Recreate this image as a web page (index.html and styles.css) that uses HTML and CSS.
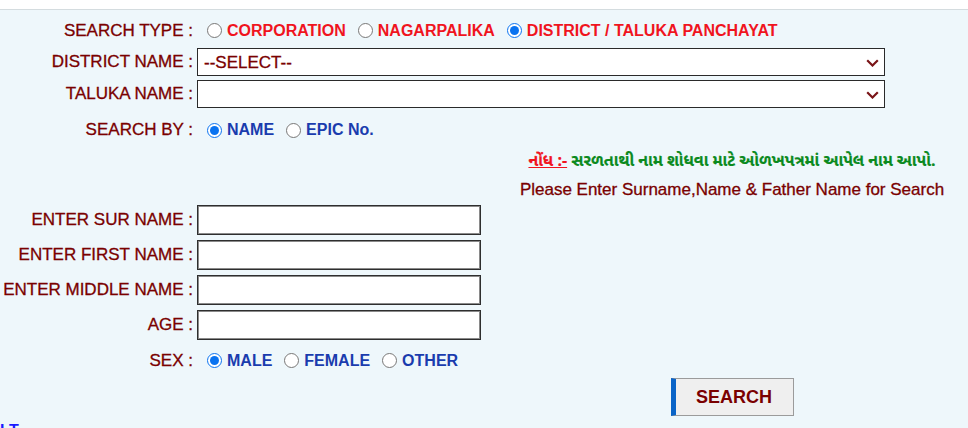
FILE: index.html
```html
<!DOCTYPE html>
<html lang="gu">
<head>
<meta charset="utf-8">
<title>Search</title>
<link rel="stylesheet" href="styles.css">
</head>
<body>
<div class="topbar"></div>
<main class="form">
  <div class="row r-type">
    <span class="lbl">SEARCH TYPE :</span>
    <div class="opts red">
      <label class="opt"><input type="radio" name="stype">CORPORATION</label>
      <label class="opt"><input type="radio" name="stype">NAGARPALIKA</label>
      <label class="opt"><input type="radio" name="stype" checked>DISTRICT / TALUKA PANCHAYAT</label>
    </div>
  </div>
  <div class="row r-select">
    <label class="lbl">DISTRICT NAME :</label>
    <div class="sel">
      <select><option>--SELECT--</option></select>
      <svg class="chev" width="13" height="8" viewBox="0 0 13 8"><polyline points="1.2,1.2 6.5,6.5 11.8,1.2" fill="none" stroke="#7a1518" stroke-width="2.2"/></svg>
    </div>
  </div>
  <div class="row r-select">
    <label class="lbl">TALUKA NAME :</label>
    <div class="sel">
      <select><option></option></select>
      <svg class="chev" width="13" height="8" viewBox="0 0 13 8"><polyline points="1.2,1.2 6.5,6.5 11.8,1.2" fill="none" stroke="#7a1518" stroke-width="2.2"/></svg>
    </div>
  </div>
  <div class="row r-by">
    <span class="lbl">SEARCH BY :</span>
    <div class="opts blue">
      <label class="opt"><input type="radio" name="sby" checked>NAME</label>
      <label class="opt"><input type="radio" name="sby">EPIC No.</label>
    </div>
  </div>
  <p class="note note-guj"><span class="note-key">નોંધ :-</span> સરળતાથી નામ શોધવા માટે ઓળખપત્રમાં આપેલ નામ આપો.</p>
  <p class="note note-en">Please Enter Surname,Name &amp; Father Name for Search</p>
  <div class="row r-input">
    <label class="lbl">ENTER SUR NAME :</label>
    <input class="txt" type="text">
  </div>
  <div class="row r-input">
    <label class="lbl">ENTER FIRST NAME :</label>
    <input class="txt" type="text">
  </div>
  <div class="row r-input">
    <label class="lbl">ENTER MIDDLE NAME :</label>
    <input class="txt" type="text">
  </div>
  <div class="row r-input">
    <label class="lbl">AGE :</label>
    <input class="txt" type="text">
  </div>
  <div class="row r-sex">
    <span class="lbl">SEX :</span>
    <div class="opts blue">
      <label class="opt"><input type="radio" name="sex" checked>MALE</label>
      <label class="opt"><input type="radio" name="sex">FEMALE</label>
      <label class="opt"><input type="radio" name="sex">OTHER</label>
    </div>
  </div>
  <div class="btn-row">
    <button class="btn" type="button">SEARCH</button>
  </div>
  <p class="foot">I T</p>
</main>
</body>
</html>
```

FILE: styles.css
```css
html, body {
  margin: 0;
  height: 100%;
  overflow: hidden;
}
body {
  background: #eef7fb;
  font-family: "Liberation Sans", Arial, sans-serif;
}
.topbar {
  height: 9px;
  background: #ffffff;
  border-bottom: 1px solid #d4dcdf;
}
.form {
  display: flex;
  flex-direction: column;
}
.row {
  display: flex;
  align-items: center;
  box-sizing: border-box;
}
.lbl {
  flex: none;
  width: 193px;
  margin-right: 4px;
  text-align: right;
  white-space: nowrap;
  color: #7a0000;
  font-size: 17px;
  -webkit-text-stroke: 0.3px #7a0000;
}
.r-type { height: 38px; padding-top: 3px; }
.r-select { height: 28px; }
.r-select + .r-select { margin-top: 4px; }
.r-by { height: 42px; padding-top: 2px; }
.r-input { height: 35px; }
.r-sex { height: 34px; padding-top: 3px; }

.opts {
  display: flex;
  align-items: center;
  gap: 12px;
  margin-left: 10px;
  font-size: 16px;
  font-weight: bold;
}
.red { color: #f0141e; }
.blue { color: #1a3cae; }
.opt {
  display: flex;
  align-items: center;
  white-space: nowrap;
}
.opt input {
  width: 15px;
  height: 15px;
  margin: 0 5px 0 0;
  accent-color: #0a73f0;
}

.sel {
  position: relative;
  width: 688px;
  height: 28px;
}
.sel select {
  appearance: none;
  -webkit-appearance: none;
  box-sizing: border-box;
  width: 100%;
  height: 100%;
  margin: 0;
  border: 1px solid #2a2a2a;
  border-radius: 0;
  background: #ffffff;
  padding: 1px 0 0 6px;
  color: #7a0000;
  font-family: "Liberation Sans", Arial, sans-serif;
  font-size: 17px;
  -webkit-text-stroke: 0.3px #7a0000;
}
.chev {
  position: absolute;
  right: 6px;
  top: 11px;
  pointer-events: none;
}

.note {
  width: 472px;
  margin: 0 0 0 auto;
  text-align: center;
  white-space: nowrap;
}
.note-guj {
  height: 24px;
  line-height: 26px;
  font-family: "Noto Sans Gujarati", "Lohit Gujarati", "Shruti", "Liberation Sans", sans-serif;
  font-size: 16px;
  font-weight: bold;
  color: #0b8a1e;
  -webkit-text-stroke: 0.2px #0b8a1e;
}
.note-key {
  color: #f0141e;
  -webkit-text-stroke: 0.2px #f0141e;
  text-decoration: underline;
}
.note-en {
  height: 28px;
  line-height: 31px;
  font-size: 17px;
  color: #7a0000;
  -webkit-text-stroke: 0.3px #7a0000;
}

.txt {
  box-sizing: border-box;
  width: 284px;
  height: 30px;
  margin: 0;
  border: 1px solid #2e2e2e;
  box-shadow: inset 0 0 0 1px #8a8a8a;
  background: #ffffff;
  padding: 0 4px;
  font-family: "Liberation Sans", Arial, sans-serif;
  font-size: 16px;
}

.btn-row {
  width: 472px;
  margin: 2px 0 0 auto;
  display: flex;
  justify-content: center;
}
.btn {
  box-sizing: border-box;
  width: 123px;
  height: 38px;
  margin: 0;
  padding: 0;
  border: 1px solid #9b9b9b;
  border-left: 5px solid #0a64c8;
  border-radius: 0;
  background: #efefef;
  color: #7a0000;
  font-family: "Liberation Sans", Arial, sans-serif;
  font-size: 18px;
  font-weight: bold;
}

.foot {
  margin: 6px 0 0 0;
  padding-left: 0;
  color: #1a1aff;
  font-size: 16px;
  font-weight: bold;
}
```
